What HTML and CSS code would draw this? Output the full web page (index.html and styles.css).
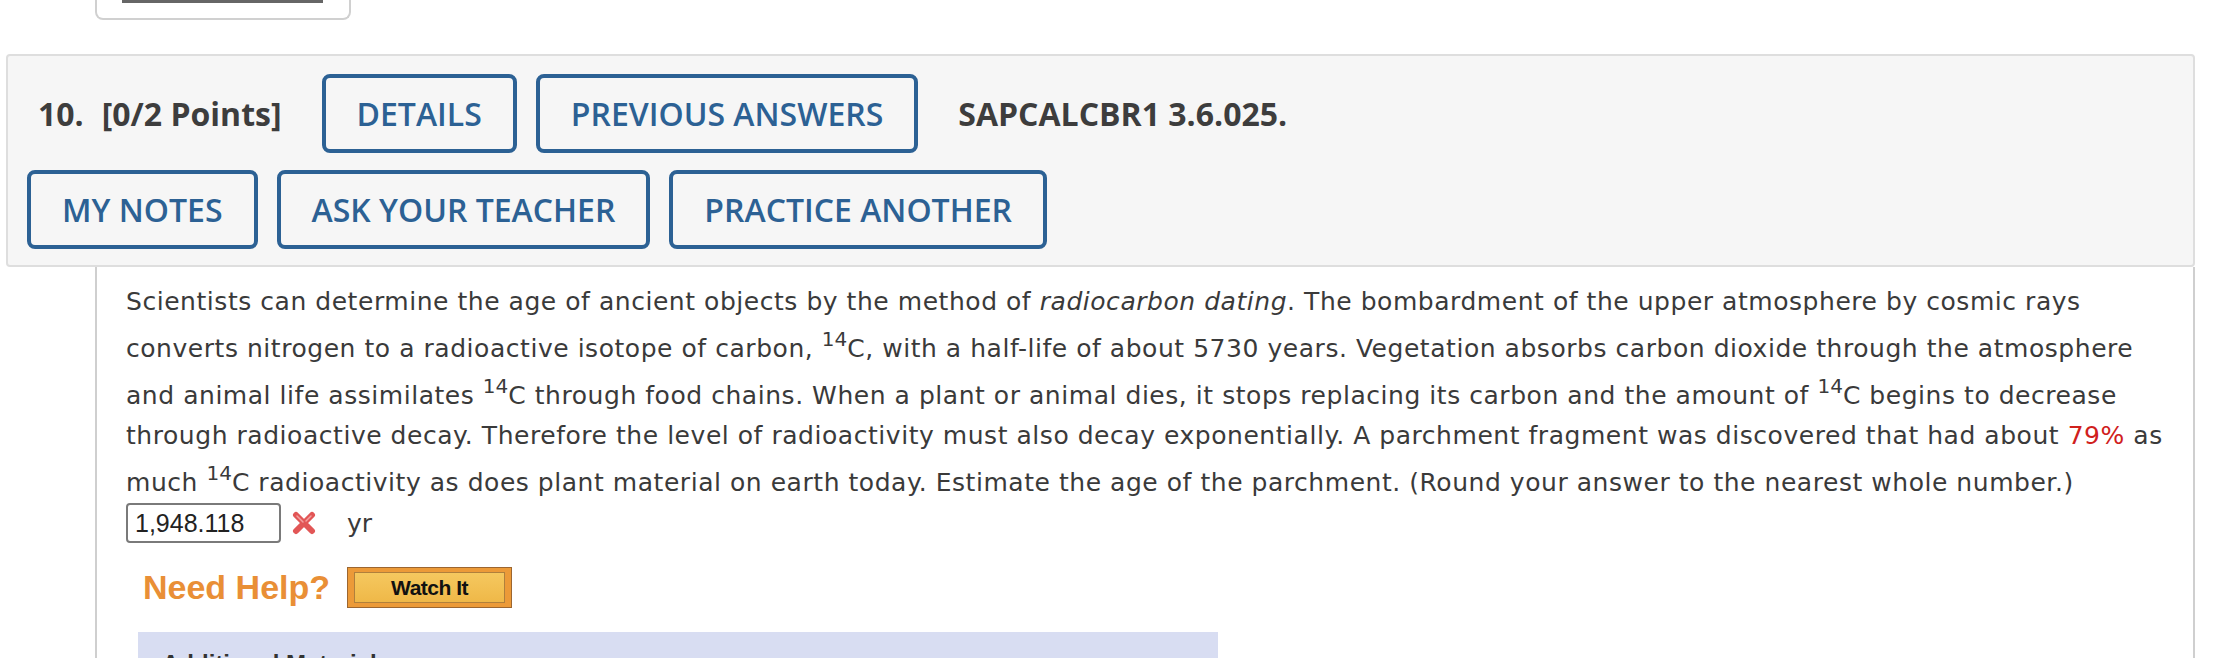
FILE: index.html
```html
<!DOCTYPE html>
<html lang="en">
<head>
    <meta charset="UTF-8">
    <title>Question 10</title>
    <link rel="stylesheet" href="styles.css">
</head>
<body>
    <div class="prev-tab">
        <div class="prev-bar"></div>
    </div>

    <div class="question-head">
        <div class="head-row">
            <span class="q-title">10.<span class="q-points">[0/2 Points]</span></span>
            <a class="q-btn q-btn-first">DETAILS</a>
            <a class="q-btn">PREVIOUS ANSWERS</a>
            <span class="q-code">SAPCALCBR1 3.6.025.</span>
        </div>
        <div class="head-row second">
            <a class="q-btn">MY NOTES</a>
            <a class="q-btn">ASK YOUR TEACHER</a>
            <a class="q-btn">PRACTICE ANOTHER</a>
        </div>
    </div>

    <div class="question-body">
        <p class="q-text">Scientists can determine the age of ancient objects by the method of <em>radiocarbon dating</em>. The bombardment of the upper atmosphere by cosmic rays converts nitrogen to a radioactive isotope of carbon, <sup>14</sup>C, with a half-life of about 5730 years. Vegetation absorbs carbon dioxide through the atmosphere and animal life assimilates <sup>14</sup>C through food chains. When a plant or animal dies, it stops replacing its carbon and the amount of <sup>14</sup>C begins to decrease through radioactive decay. Therefore the level of radioactivity must also decay exponentially. A parchment fragment was discovered that had about <span class="red">79%</span> as much <sup>14</sup>C radioactivity as does plant material on earth today. Estimate the age of the parchment. (Round your answer to the nearest whole number.)</p>

        <div class="answer-row">
            <input type="text" class="answer" value="1,948.118">
            <svg class="wrong" width="26" height="24" viewBox="0 0 26 24">
                <path d="M5 4 L21 20 M21 4 L5 20" stroke="#e25656" stroke-width="6" stroke-linecap="round"/>
                <path d="M6 5 L12 11 M20 5 L15 10" stroke="#f3a0a0" stroke-width="1.5" stroke-linecap="round"/>
            </svg>
            <span class="unit">yr</span>
        </div>

        <div class="help-row">
            <span class="need-help">Need Help?</span>
            <a class="watch-btn"><span>Watch It</span></a>
        </div>

        <div class="materials">
            <h4>Additional Materials</h4>
        </div>
    </div>
</body>
</html>
```

FILE: styles.css
```css
*{
    box-sizing: border-box;
}
body{
    margin: 0;
    background: #fff;
    font-family: "DejaVu Sans", Verdana, sans-serif;
    color: #333;
}
.prev-tab{
    margin-left: 95px;
    width: 256px;
    height: 20px;
    border: 2px solid #d0d0d0;
    border-top: none;
    border-radius: 0 0 8px 8px;
}
.prev-bar{
    height: 3px;
    margin: 0 26px 0 25px;
    background: #666;
}
.question-head{
    margin: 34px 23px 0 6px;
    background: #f6f6f6;
    border: 2px solid #dedede;
    border-radius: 4px;
    padding: 18px 19px 16px;
    font-family: "Open Sans", sans-serif;
}
.head-row{
    display: flex;
    align-items: center;
}
.head-row.second{
    margin-top: 17px;
}
.q-title{
    margin-left: 11px;
    font-size: 32px;
    font-weight: 700;
    color: #3d3d3d;
}
.q-points{
    margin-left: 18px;
}
.q-btn{
    display: flex;
    align-items: center;
    height: 79px;
    padding: 0 31px;
    margin-right: 19px;
    border: 4px solid #2c6194;
    border-radius: 8px;
    color: #2c6194;
    font-size: 32px;
    font-weight: 600;
}
.q-btn-first{
    margin-left: 40px;
}
.q-code{
    margin-left: 21px;
    font-size: 32px;
    font-weight: 700;
    color: #3d3d3d;
}
.question-body{
    margin: 0 23px 0 95px;
    border-left: 2px solid #cfcfcf;
    border-right: 2px solid #cfcfcf;
    padding: 15px 10px 0 29px;
    height: 400px;
}
.q-text{
    margin: 0;
    font-size: 25px;
    letter-spacing: 0.54px;
    line-height: 40px;
    color: #3a3a3a;
}
.q-text sup{
    font-size: 20px;
    letter-spacing: 0;
    line-height: 35px;
    vertical-align: 11px;
}
.red{
    color: #d0201c;
}
.answer-row{
    display: flex;
    align-items: center;
    height: 40px;
}
.answer{
    width: 155px;
    height: 40px;
    padding: 0 7px;
    border: 2px solid #7a7a7a;
    border-radius: 4px;
    font-family: "Liberation Sans", Arial, sans-serif;
    font-size: 25px;
    color: #222;
}
.wrong{
    margin-left: 10px;
}
.unit{
    margin-left: 30px;
    font-size: 25px;
    color: #3a3a3a;
}
.help-row{
    display: flex;
    align-items: center;
    margin-top: 24px;
    padding-left: 17px;
}
.need-help{
    font-family: "Liberation Sans", Arial, sans-serif;
    font-size: 34px;
    font-weight: 700;
    color: #e98f36;
}
.watch-btn{
    margin-left: 17px;
    width: 165px;
    height: 41px;
    padding: 4px 6px;
    background: #ec9a38;
    border: 1px solid #9c6630;
}
.watch-btn span{
    display: flex;
    justify-content: center;
    align-items: center;
    height: 100%;
    background: linear-gradient(#f5c85f, #efb848);
    border: 1px solid #b0803c;
    font-family: "Liberation Sans", Arial, sans-serif;
    font-size: 21px;
    font-weight: 700;
    color: #111;
    letter-spacing: -0.5px;
}
.materials{
    margin: 24px 0 0 12px;
    width: 1080px;
    height: 80px;
    background: #d8ddf2;
    padding: 18px 24px;
}
.materials h4{
    margin: 0;
    font-family: "Liberation Sans", Arial, sans-serif;
    font-size: 24px;
    color: #333;
}
```
